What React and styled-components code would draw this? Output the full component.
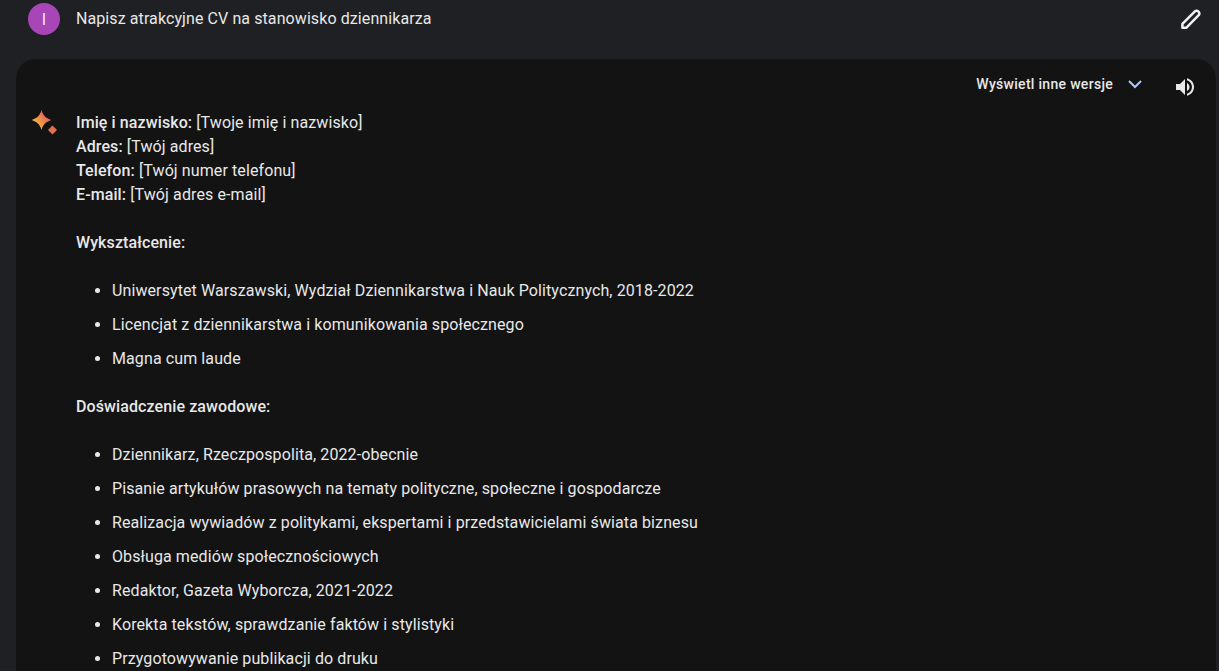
import React from "react";
import styled, { createGlobalStyle } from "styled-components";

const GlobalStyle = createGlobalStyle`
    html, body {
        margin: 0;
        height: 100%;
        overflow: hidden;
        background: #1f2023;
    }
    body {
        font-family: Roboto, "Noto Sans", sans-serif;
        color: #e8e8e8;
    }
`;

function PencilIcon() {
    return (
        <svg width="24" height="24" viewBox="0 0 24 24" fill="none">
            <path
                d="M3.400 20.800v-3.900L15.900 4.400a2.300 2.300 0 0 1 3.300 0l.5.500a2.300 2.300 0 0 1 0 3.300L7.200 20.800z"
                stroke="#f0f0f0"
                strokeWidth="2.500"
                strokeLinejoin="round"
            />
        </svg>
    );
}

function SparkIcon() {
    return (
        <svg width="30" height="30" viewBox="0 0 30 30">
            <defs>
                <linearGradient id="spark" x1="0.1" y1="0.8" x2="0.9" y2="0.2">
                    <stop offset="0" stopColor="#f6c83a" />
                    <stop offset="0.5" stopColor="#ec8a48" />
                    <stop offset="1" stopColor="#d8506f" />
                </linearGradient>
            </defs>
            <path d="M13.500 0C15 5.500 17.500 8 23.500 10C17.500 12 15 14.500 13.500 20C12 14.500 9.500 12 3.500 10C9.500 8 12 5.500 13.500 0Z" fill="url(#spark)" />
            <path d="M24.500 15.500L29 20L24.500 24.500L20 20Z" fill="#e0704e" />
        </svg>
    );
}

function ChevronIcon() {
    return (
        <svg width="24" height="24" viewBox="0 0 24 24" fill="none">
            <path d="M6 9l6 6 6-6" stroke="#a8c7fa" strokeWidth="2" />
        </svg>
    );
}

function SpeakerIcon() {
    return (
        <svg width="24" height="24" viewBox="0 0 24 24" fill="#e8e8e8">
            <path d="M3 9v6h4l5 5V4L7 9H3z" />
            <path d="M14 7.970v8.050c1.500-.740 2.500-2.260 2.500-4.020 0-1.770-1-3.290-2.500-4.030z" />
            <path d="M14 3.230v2.060c2.890.860 5 3.540 5 6.710s-2.110 5.850-5 6.710v2.060c4.010-.910 7-4.490 7-8.770s-2.990-7.860-7-8.770z" />
        </svg>
    );
}

const contact = [
    ["Imię i nazwisko:", "[Twoje imię i nazwisko]"],
    ["Adres:", "[Twój adres]"],
    ["Telefon:", "[Twój numer telefonu]"],
    ["E-mail:", "[Twój adres e-mail]"],
];

const education = [
    "Uniwersytet Warszawski, Wydział Dziennikarstwa i Nauk Politycznych, 2018-2022",
    "Licencjat z dziennikarstwa i komunikowania społecznego",
    "Magna cum laude",
];

const experience = [
    "Dziennikarz, Rzeczpospolita, 2022-obecnie",
    "Pisanie artykułów prasowych na tematy polityczne, społeczne i gospodarcze",
    "Realizacja wywiadów z politykami, ekspertami i przedstawicielami świata biznesu",
    "Obsługa mediów społecznościowych",
    "Redaktor, Gazeta Wyborcza, 2021-2022",
    "Korekta tekstów, sprawdzanie faktów i stylistyki",
    "Przygotowywanie publikacji do druku",
];

export default function App() {
    return (
        <Page>
            <GlobalStyle />
            <PromptRow>
                <Avatar>I</Avatar>
                <PromptText>Napisz atrakcyjne CV na stanowisko dziennikarza</PromptText>
                <EditButton>
                    <PencilIcon />
                </EditButton>
            </PromptRow>
            <ResponseCard>
                <CardHeader>
                    <Versions>
                        Wyświetl inne wersje
                        <ChevronIcon />
                    </Versions>
                    <SoundButton>
                        <SpeakerIcon />
                    </SoundButton>
                </CardHeader>
                <ResponseBody>
                    <SparkSlot>
                        <SparkIcon />
                    </SparkSlot>
                    <Content>
                        <Paragraph>
                            {contact.map(([label, value]) => (
                                <Line key={label}>
                                    <b>{label}</b> {value}
                                </Line>
                            ))}
                        </Paragraph>
                        <Paragraph>
                            <b>Wykształcenie:</b>
                        </Paragraph>
                        <List>
                            {education.map((item) => (
                                <li key={item}>{item}</li>
                            ))}
                        </List>
                        <Paragraph>
                            <b>Doświadczenie zawodowe:</b>
                        </Paragraph>
                        <List>
                            {experience.map((item) => (
                                <li key={item}>{item}</li>
                            ))}
                        </List>
                    </Content>
                </ResponseBody>
            </ResponseCard>
        </Page>
    );
}

const Page = styled.div`
    height: 671px;
    overflow: hidden;
    padding: 0 3px 0 16px;
    box-sizing: border-box;
`;

const PromptRow = styled.div`
    display: flex;
    align-items: center;
    height: 38px;
    padding: 0 13px 21px 12px;
`;

const Avatar = styled.div`
    width: 32px;
    height: 32px;
    border-radius: 50%;
    background: #a846b8;
    color: #f3e6f5;
    display: flex;
    align-items: center;
    justify-content: center;
    font-size: 16px;
    flex-shrink: 0;
`;

const PromptText = styled.div`
    flex: 1;
    margin-left: 16px;
    font-size: 16px;
    line-height: 24px;
    letter-spacing: 0.09px;
`;

const EditButton = styled.div`
    width: 24px;
    height: 24px;
`;

const ResponseCard = styled.div`
    background: #131314;
    border-radius: 20px 20px 0 0;
    height: 640px;
    padding: 0 19px 0 12px;
`;

const CardHeader = styled.div`
    display: flex;
    justify-content: flex-end;
    align-items: center;
    height: 52px;
`;

const Versions = styled.div`
    display: flex;
    align-items: center;
    gap: 10px;
    font-size: 14px;
    font-weight: 500;
    letter-spacing: 0.3px;
    margin-bottom: 3px;
`;

const SoundButton = styled.div`
    width: 24px;
    height: 24px;
    margin-left: 26px;
    margin-top: 3px;
`;

const ResponseBody = styled.div`
    display: flex;
    align-items: flex-start;
`;

const SparkSlot = styled.div`
    width: 30px;
    height: 30px;
    margin-right: 18px;
    margin-top: -1px;
    margin-bottom: -1px;
`;

const Content = styled.div`
    font-size: 16px;
    line-height: 24px;
    letter-spacing: 0.1px;
    b {
        font-weight: 500;
    }
`;

const Paragraph = styled.div`
    margin-bottom: 24px;
`;

const Line = styled.div``;

const List = styled.ul`
    margin: 0 0 24px;
    padding: 0 0 0 36px;
    li {
        margin-bottom: 10px;
    }
    li:last-child {
        margin-bottom: 0;
    }
`;
